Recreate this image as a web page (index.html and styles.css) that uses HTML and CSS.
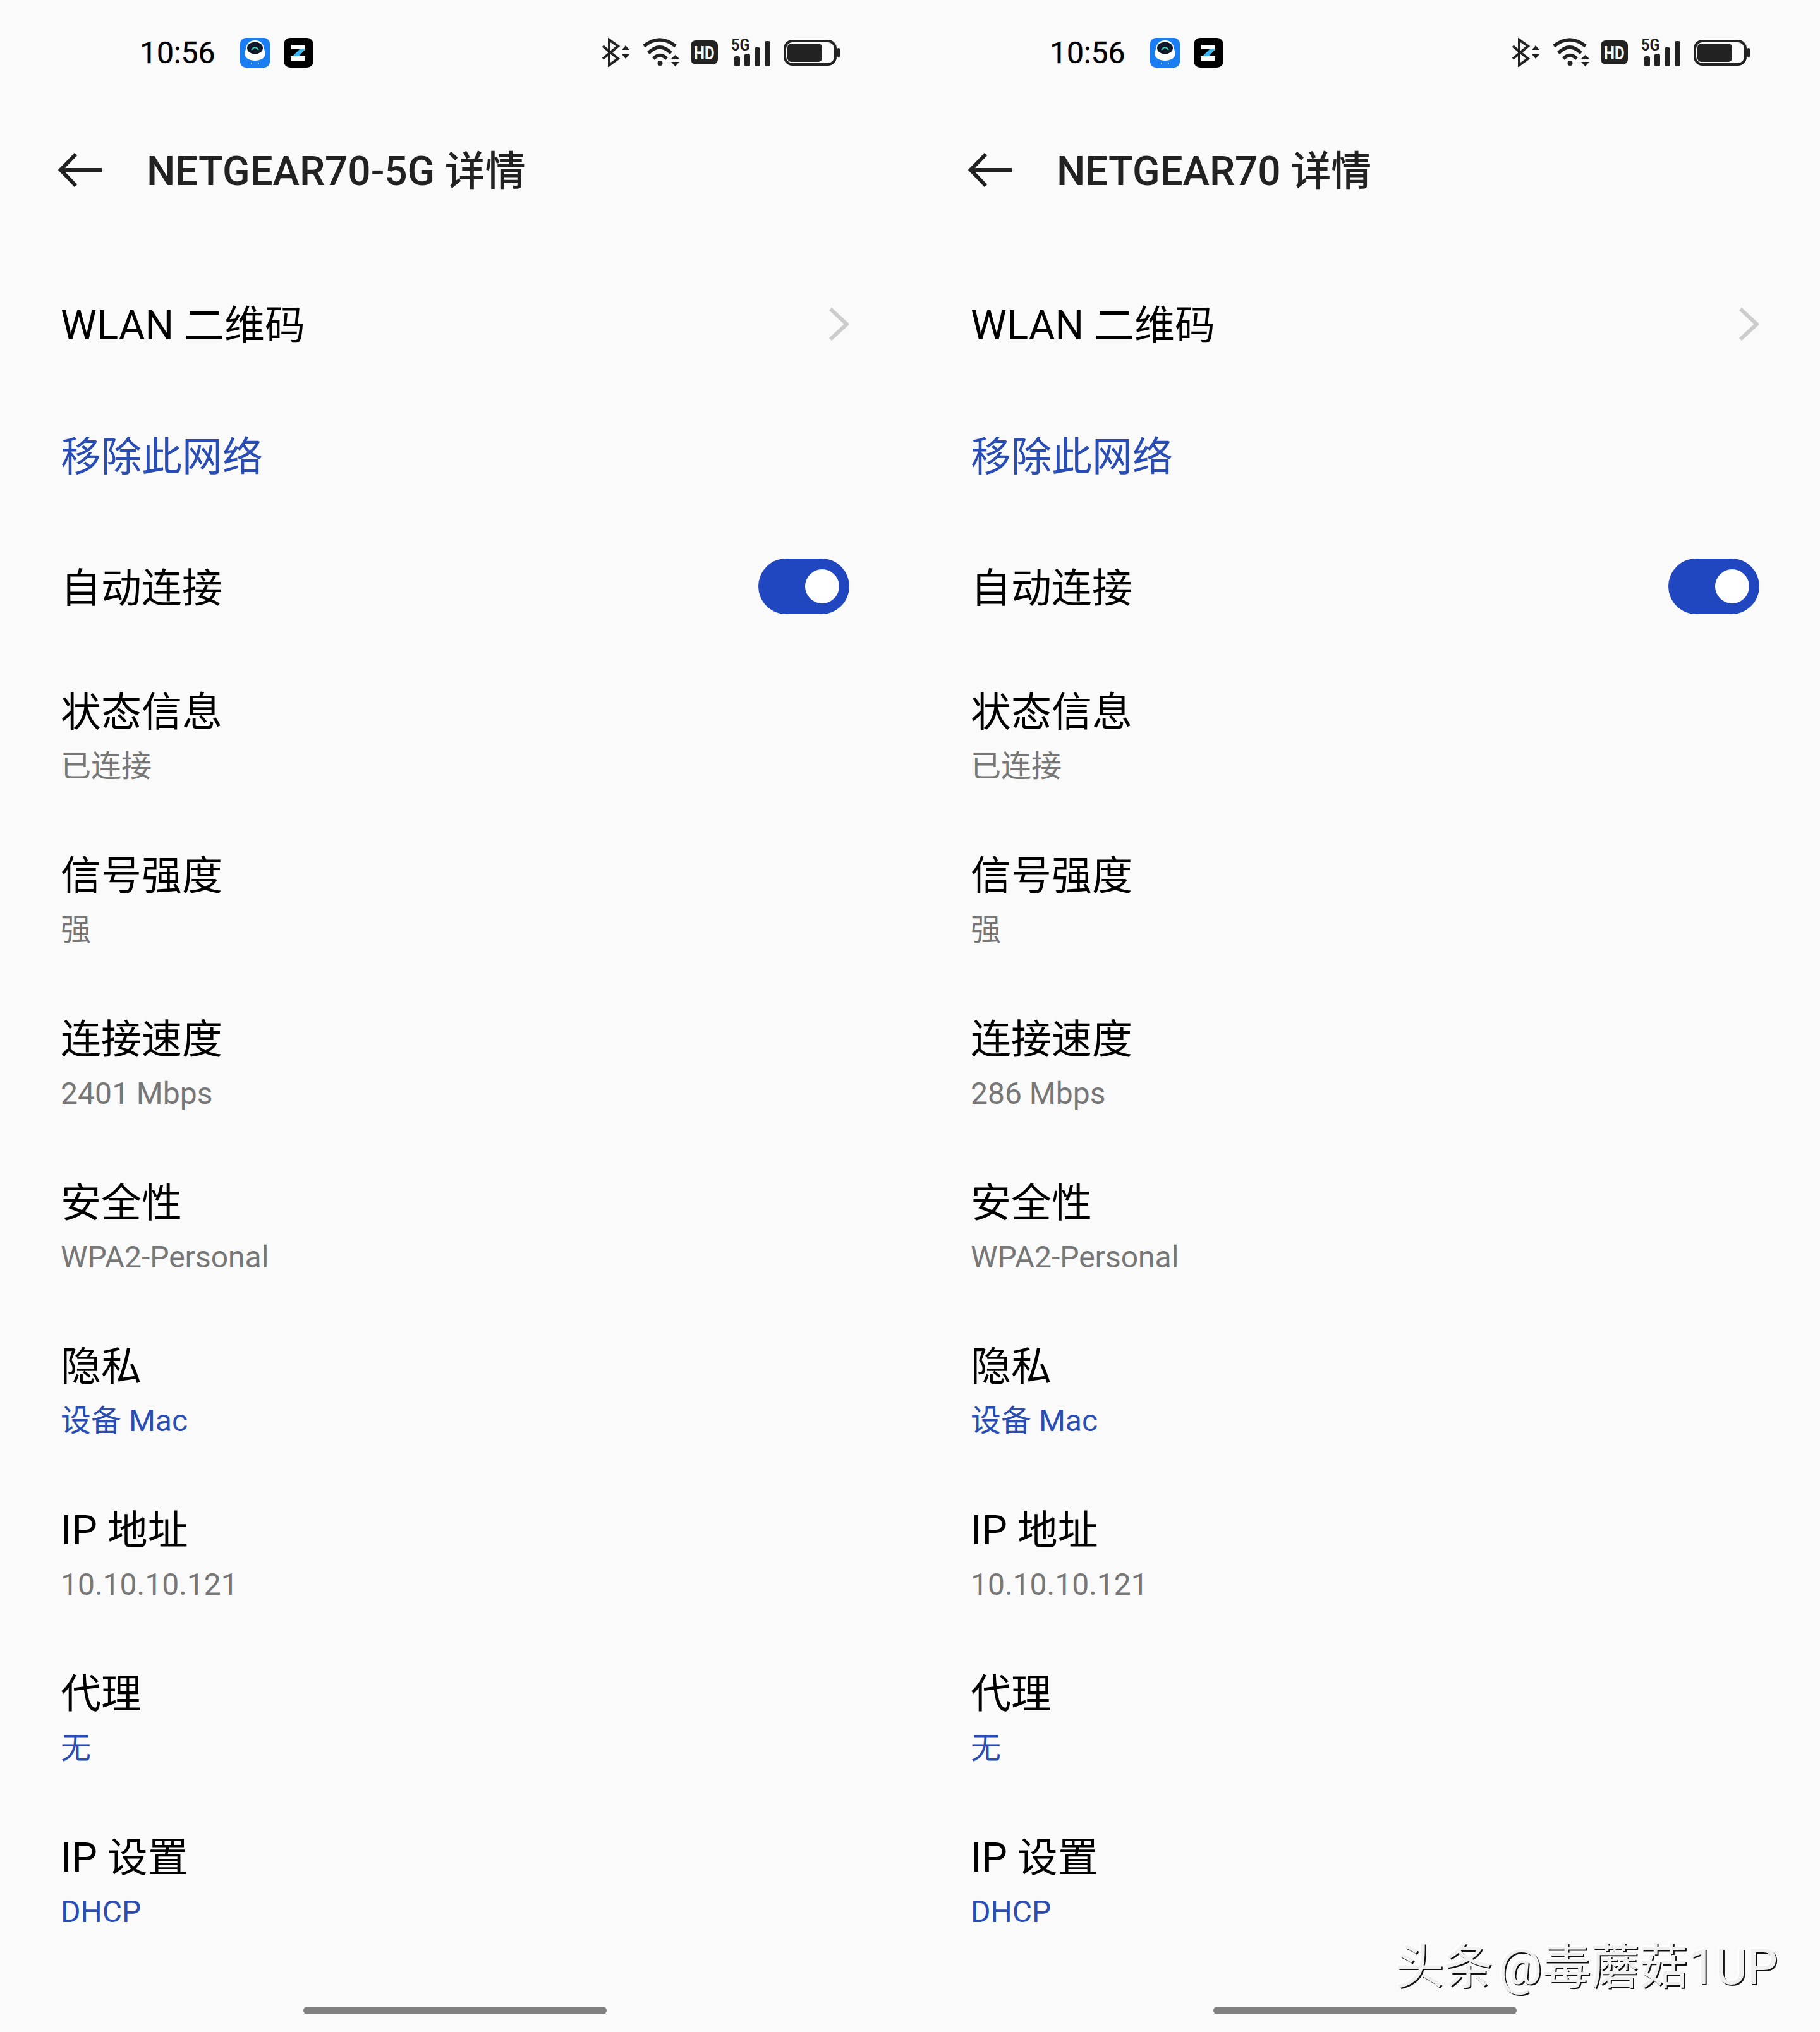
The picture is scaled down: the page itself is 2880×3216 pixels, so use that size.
FILE: index.html
```html
<!DOCTYPE html>
<html lang="zh-CN">
<head>
    <meta charset="UTF-8">
    <title>WLAN 详情</title>
    <link rel="stylesheet" href="styles.css">
</head>
<body>
    <svg class="defs" width="0" height="0">
        <symbol id="app-robot" viewBox="0 0 47 47">
            <rect width="47" height="47" rx="9" fill="#1a7ef2"/>
            <path d="M23.5 4C33 4 37 10 38 18C41 24 41 29 35 33C28 37 19 37 12 33C6 29 6 24 9 18C10 10 14 4 23.5 4Z" fill="#fff"/>
            <ellipse cx="23.5" cy="16" rx="12.5" ry="9.5" fill="#10182a"/>
            <path d="M18 19Q23.5 11 29 19" fill="none" stroke="#2fd3b5" stroke-width="2"/>
            <path d="M18 39v3M29 39v3" stroke="#8fd8f8" stroke-width="2"/>
        </symbol>
        <symbol id="app-z" viewBox="0 0 47 47">
            <rect width="47" height="47" rx="10" fill="#000"/>
            <path d="M12 11H34V18L25 27H16L26 18H12Z" fill="#fff"/>
            <path d="M26 17H34L24 29H14Z" fill="#36b4ea"/>
            <rect x="11" y="29" width="23" height="7" fill="#fff"/>
        </symbol>
        <symbol id="ic-bt" viewBox="0 0 44 46">
            <path d="M2 13L26 33L12 43V3L26 13L2 33" fill="none" stroke="#222" stroke-width="4"/>
            <path d="M38 12L44 19H32ZM32 26H44L38 33Z" fill="#222"/>
        </symbol>
        <symbol id="ic-wifi" viewBox="0 0 61 46">
            <g fill="none" stroke="#222" stroke-width="5.5">
                <path d="M2 13Q27 -7 52 13"/>
                <path d="M9 24Q27 6 45 24"/>
                <path d="M17 33Q27.5 22 38 33"/>
            </g>
            <circle cx="27.5" cy="40" r="4" fill="#222"/>
            <path d="M51.5 27L58 33H45ZM45 38H58L51.5 45Z" fill="#222"/>
        </symbol>
        <symbol id="ic-bars" viewBox="0 0 62 43">
            <g fill="#222">
                <rect x="4" y="27" width="9" height="16" rx="3"/>
                <rect x="20" y="23" width="9" height="20" rx="3"/>
                <rect x="36" y="13" width="9" height="30" rx="3"/>
                <rect x="52" y="3" width="9" height="40" rx="3"/>
            </g>
        </symbol>
        <symbol id="ic-batt" viewBox="0 0 89 41">
            <rect x="2" y="2" width="80" height="37" rx="12" fill="none" stroke="#222" stroke-width="4"/>
            <rect x="6" y="6" width="55" height="29" rx="6" fill="#222"/>
            <rect x="85" y="13" width="4" height="15" rx="2" fill="#222"/>
        </symbol>
        <symbol id="ic-back" viewBox="0 0 70 54">
            <path d="M28 2L4 27L28 52M4 27H69" fill="none" stroke="#222" stroke-width="6"/>
        </symbol>
        <symbol id="ic-more" viewBox="0 0 32 52">
            <path d="M2 2L28 26L2 50" fill="none" stroke="#ccc" stroke-width="6"/>
        </symbol>
    </svg>

    <div class="screens">
        <!-- 5G network -->
        <div class="screen">
            <div class="status-bar">
                <span class="clock">10:56</span>
                <svg class="app-icon first"><use href="#app-robot"/></svg>
                <svg class="app-icon"><use href="#app-z"/></svg>
                <div class="status-right">
                    <svg class="bt"><use href="#ic-bt"/></svg>
                    <svg class="wifi"><use href="#ic-wifi"/></svg>
                    <div class="hd"><span>HD</span></div>
                    <div class="sig"><span class="sig-label">5G</span><svg class="bars"><use href="#ic-bars"/></svg></div>
                    <svg class="batt"><use href="#ic-batt"/></svg>
                </div>
            </div>
            <div class="header">
                <svg class="back"><use href="#ic-back"/></svg>
                <span class="title">NETGEAR70-5G 详情</span>
            </div>
            <div class="row-single">
                <span class="label">WLAN 二维码</span>
                <svg class="more"><use href="#ic-more"/></svg>
            </div>
            <div class="row-single"><span class="label link">移除此网络</span></div>
            <div class="row-single">
                <span class="label">自动连接</span>
                <div class="toggle"><div class="knob"></div></div>
            </div>
            <div class="row"><div class="label">状态信息</div><div class="sub">已连接</div></div>
            <div class="row"><div class="label">信号强度</div><div class="sub">强</div></div>
            <div class="row"><div class="label">连接速度</div><div class="sub">2401 Mbps</div></div>
            <div class="row"><div class="label">安全性</div><div class="sub">WPA2-Personal</div></div>
            <div class="row"><div class="label">隐私</div><div class="sub link">设备 Mac</div></div>
            <div class="row"><div class="label">IP 地址</div><div class="sub">10.10.10.121</div></div>
            <div class="row"><div class="label">代理</div><div class="sub link">无</div></div>
            <div class="row"><div class="label">IP 设置</div><div class="sub link">DHCP</div></div>
            <div class="home-bar"></div>
        </div>

        <!-- 2.4G network -->
        <div class="screen">
            <div class="status-bar">
                <span class="clock">10:56</span>
                <svg class="app-icon first"><use href="#app-robot"/></svg>
                <svg class="app-icon"><use href="#app-z"/></svg>
                <div class="status-right">
                    <svg class="bt"><use href="#ic-bt"/></svg>
                    <svg class="wifi"><use href="#ic-wifi"/></svg>
                    <div class="hd"><span>HD</span></div>
                    <div class="sig"><span class="sig-label">5G</span><svg class="bars"><use href="#ic-bars"/></svg></div>
                    <svg class="batt"><use href="#ic-batt"/></svg>
                </div>
            </div>
            <div class="header">
                <svg class="back"><use href="#ic-back"/></svg>
                <span class="title">NETGEAR70 详情</span>
            </div>
            <div class="row-single">
                <span class="label">WLAN 二维码</span>
                <svg class="more"><use href="#ic-more"/></svg>
            </div>
            <div class="row-single"><span class="label link">移除此网络</span></div>
            <div class="row-single">
                <span class="label">自动连接</span>
                <div class="toggle"><div class="knob"></div></div>
            </div>
            <div class="row"><div class="label">状态信息</div><div class="sub">已连接</div></div>
            <div class="row"><div class="label">信号强度</div><div class="sub">强</div></div>
            <div class="row"><div class="label">连接速度</div><div class="sub">286 Mbps</div></div>
            <div class="row"><div class="label">安全性</div><div class="sub">WPA2-Personal</div></div>
            <div class="row"><div class="label">隐私</div><div class="sub link">设备 Mac</div></div>
            <div class="row"><div class="label">IP 地址</div><div class="sub">10.10.10.121</div></div>
            <div class="row"><div class="label">代理</div><div class="sub link">无</div></div>
            <div class="row"><div class="label">IP 设置</div><div class="sub link">DHCP</div></div>
            <div class="home-bar"></div>
        </div>
    </div>

    <div class="watermark">头条 @毒蘑菇1UP</div>
</body>
</html>
```

FILE: styles.css
```css
body {
    margin: 0;
    background: #fafafa;
    color: #000;
    font-family: Roboto, "Noto Sans CJK SC", sans-serif;
}
.defs {
    position: absolute;
}
.screens {
    display: grid;
    grid-template-columns: 1440px 1440px;
    height: 3216px;
    overflow: hidden;
}
.screen {
    display: flex;
    flex-direction: column;
    height: 3216px;
}

/* status bar */
.status-bar {
    display: flex;
    align-items: center;
    height: 166px;
    padding: 0 111px 0 221px;
    box-sizing: border-box;
}
.clock {
    font-size: 48px;
    color: #000;
    -webkit-text-stroke: 0.4px #000;
}
.app-icon {
    width: 47px;
    height: 47px;
    margin-left: 22px;
}
.app-icon.first {
    margin-left: 39px;
}
.status-right {
    display: flex;
    align-items: center;
    margin-left: auto;
}
.bt { width: 44px; height: 46px; }
.wifi { width: 61px; height: 46px; margin-left: 21px; }
.hd {
    display: flex;
    align-items: center;
    justify-content: center;
    width: 43px;
    height: 38px;
    margin-left: 15px;
    border-radius: 8px;
    background: #222;
    color: #fafafa;
    font-size: 30px;
    font-weight: 700;
}
.hd span {
    transform: scaleX(0.8);
}
.sig {
    position: relative;
    width: 62px;
    height: 43px;
    margin-left: 22px;
}
.sig-label {
    position: absolute;
    left: -1px;
    top: -4px;
    font-size: 26px;
    line-height: 26px;
    font-weight: 700;
    color: #222;
    transform: scaleX(0.9);
    transform-origin: left;
}
.bars {
    display: block;
    width: 62px;
    height: 43px;
}
.batt { width: 89px; height: 41px; margin-left: 20px; }

/* title row */
.header {
    display: flex;
    align-items: center;
    height: 206px;
    margin-bottom: 40px;
    padding-left: 92px;
}
.back {
    width: 70px;
    height: 54px;
}
.title {
    margin: 0 0 8px 70px;
    font-size: 64px;
    font-weight: 500;
    letter-spacing: -0.1px;
    color: #222;
}

/* list rows */
.row-single {
    display: flex;
    align-items: center;
    justify-content: space-between;
    height: 208px;
    padding: 0 96px;
}
.row {
    height: 259px;
    padding: 49px 96px 0;
    box-sizing: border-box;
}
.label {
    font-size: 64px;
    line-height: 86px;
}
.sub {
    font-size: 48px;
    line-height: 84px;
    color: #777;
}
.link {
    color: #2a4db5;
}
.more {
    width: 32px;
    height: 52px;
    margin-bottom: 7px;
}
.toggle {
    display: flex;
    align-items: center;
    justify-content: flex-end;
    width: 144px;
    height: 88px;
    margin-bottom: 8px;
    padding-right: 16px;
    border-radius: 44px;
    background: #2046c0;
    box-sizing: border-box;
}
.knob {
    width: 54px;
    height: 54px;
    border-radius: 50%;
    background: #fff;
}

/* gesture bar */
.home-bar {
    width: 480px;
    height: 12px;
    margin: auto auto 28px;
    border-radius: 6px;
    background: #808080;
}

.watermark {
    position: absolute;
    left: 2208px;
    top: 3064px;
    font-size: 77px;
    line-height: 100px;
    word-spacing: -10px;
    white-space: nowrap;
    color: #f0f0f0;
    text-shadow: 2px 2px 0 #111, -2px -2px 0 #fff;
}
```
